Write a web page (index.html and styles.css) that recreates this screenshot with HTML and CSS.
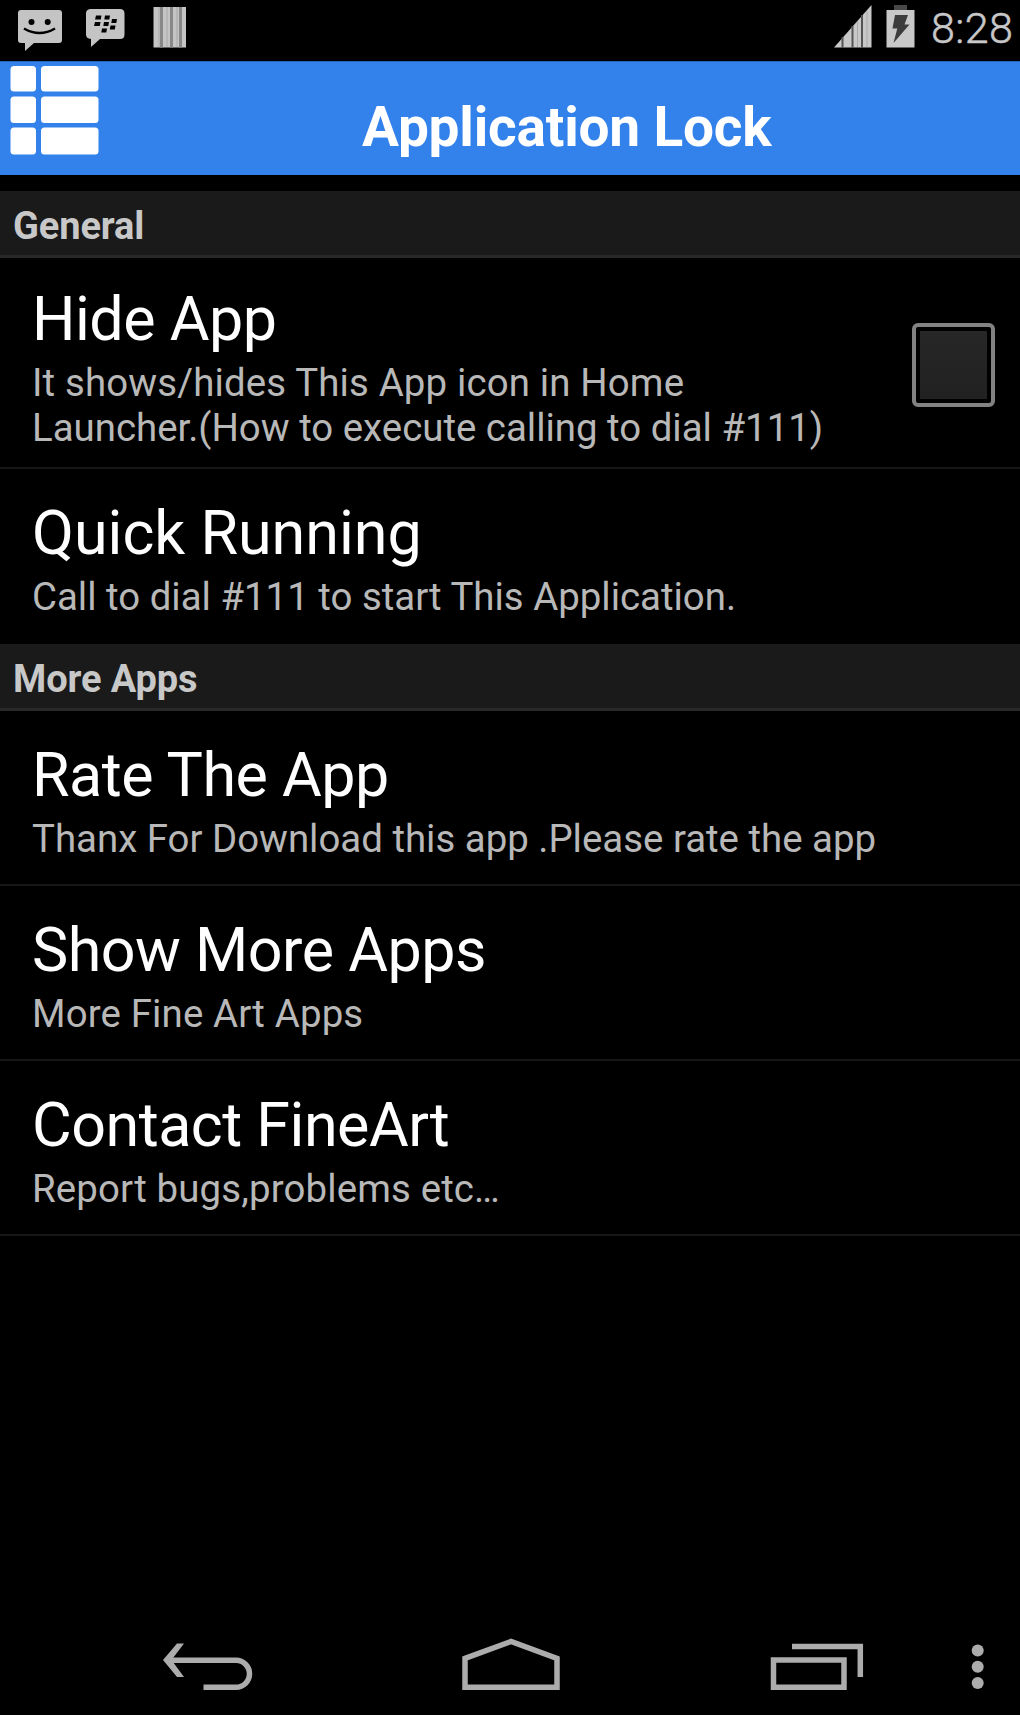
FILE: index.html
```html
<!DOCTYPE html>
<html lang="en">
<head>
  <meta charset="UTF-8">
  <meta name="viewport" content="width=device-width, initial-scale=1.0">
  <title>Application Lock</title>
  <link rel="stylesheet" href="styles.css">
</head>
<body>
  <!-- Status bar -->
  <div class="status-bar">
    <svg class="status-icons" width="200" height="61" viewBox="0 0 200 61">
      <path fill="#c4c4c4" d="M21 10h38q3 0 3 3v27q0 3-3 3H34l-9 8V43h-4q-3 0-3-3V13q0-3 3-3z"/>
      <circle cx="31.5" cy="22" r="3"/>
      <circle cx="47.7" cy="22" r="3"/>
      <path d="M24 28.5q15.500 9 31 0" fill="none" stroke="#000" stroke-width="2.600"/>
      <path fill="#c4c4c4" d="M91 9h29q4.500 0 4.500 4.500v21q0 4.500-4.500 4.500h-20l-9 8v-8q-5-.5-5-4.500v-21q0-4.500 5-4.500z"/>
      <path d="M96 15.500h5.500l-.7 4H95zM105 15.500h5l-.7 4h-5zM95 22h5.500l-.7 4H94zM104 22h5l-.7 4h-5zM112 19h5l-.7 4h-5zM110.500 25.500h5l-.7 4h-5zM102 28.500h5l-.7 4h-5z"/>
      <path fill="#c4c4c4" d="M153.500 7h32.500v40.500h-32.500z"/>
      <path d="M161.500 7v40.500M171.500 7v40.500M180.500 7v40.500" stroke="#888" stroke-width="3"/>
      <path d="M159 7v40M167 7v40M177 7v40" stroke="#aaa" stroke-width="1"/>
    </svg>
    <div class="status-right">
      <svg width="85" height="61" viewBox="833 0 85 61">
        <path fill="#c8c8c8" d="M834 47.500 871.500 5v42.500z"/>
        <path d="M842.500 37v11M852.500 26v22M862 15v33" stroke="#555" stroke-width="2"/>
        <path d="M857.500 21v26M867 11v36" stroke="#aaa" stroke-width="1"/>
        <path fill="#484848" d="M894 5h13v5h-13z"/>
        <path fill="#c8c8c8" d="M886.500 10h28v37.500h-28z"/>
        <path fill="#3c3c3c" d="M895 15h13l-3.500 9.500h5L893.500 43l3.800-14.500H892.500z"/>
      </svg>
      <span class="clock">8:28</span>
    </div>
  </div>

  <!-- Title bar -->
  <div class="title-bar">
    <svg class="menu-icon" width="90" height="90" viewBox="0 0 90 90" fill="#fff">
      <rect x="0.500" y="0" width="25.500" height="25.500" rx="3.500"/>
      <rect x="31" y="0" width="57.500" height="25.500" rx="3.500"/>
      <rect x="0.500" y="30.500" width="25.500" height="26.500" rx="3.500"/>
      <rect x="31" y="30.500" width="57.500" height="26.500" rx="3.500"/>
      <rect x="0.500" y="61.500" width="25.500" height="27" rx="3.500"/>
      <rect x="31" y="61.500" width="57.500" height="27" rx="3.500"/>
    </svg>
    <h1>Application Lock</h1>
  </div>

  <!-- Settings -->
  <div class="settings">
    <h2>General</h2>
    <div class="row row-tall">
      <div class="row-text">
        <h3>Hide App</h3>
        <p><span class="wide">It shows/hides This App icon in Home</span><br>Launcher.(How to execute calling to dial #111)</p>
      </div>
      <div class="checkbox"></div>
    </div>
    <div class="row last">
      <div class="row-text">
        <h3>Quick Running</h3>
        <p>Call to dial #111 to start This Application.</p>
      </div>
    </div>

    <h2>More Apps</h2>
    <div class="row">
      <div class="row-text">
        <h3>Rate The App</h3>
        <p>Thanx For Download this app .Please rate the app</p>
      </div>
    </div>
    <div class="row">
      <div class="row-text">
        <h3>Show More Apps</h3>
        <p class="wide">More Fine Art Apps</p>
      </div>
    </div>
    <div class="row">
      <div class="row-text">
        <h3>Contact FineArt</h3>
        <p class="wide">Report bugs,problems etc…</p>
      </div>
    </div>
  </div>

  <!-- Navigation bar -->
  <div class="nav-bar">
    <svg width="1020" height="95" viewBox="0 0 1020 95" fill="none" stroke="#acacac" stroke-width="5.500">
      <path d="M169 40.300h67a13.500 13.500 0 0 1 0 27h-32.500"/>
      <path fill="#acacac" stroke="none" d="M163 40 177 23.500h7L171.500 40 184 57h-7z"/>
      <path d="M465 38.300 511 21.500l46 16.800v29H465z"/>
      <path d="M773.500 40h70.500v27.300h-70.500zM792 26.500h68.300V57"/>
      <g fill="#acacac" stroke="none">
        <circle cx="977.700" cy="30.500" r="6"/>
        <circle cx="977.700" cy="46.700" r="6"/>
        <circle cx="977.700" cy="63" r="6"/>
      </g>
    </svg>
  </div>
</body>
</html>
```
FILE: styles.css
```css
* {
  box-sizing: border-box;
}
body {
  margin: 0;
  height: 1715px;
  display: flex;
  flex-direction: column;
  background: #000;
  color: #fff;
  font-family: Roboto, "Liberation Sans", sans-serif;
  overflow: hidden;
}
h1, h2, h3, p {
  margin: 0;
  white-space: nowrap;
}
svg {
  display: block;
}
.status-bar {
  height: 61px;
  display: flex;
  justify-content: space-between;
}
.status-right {
  display: flex;
}
.clock {
  width: 102px;
  padding-left: 13px;
  font-size: 43px;
  letter-spacing: 0.4px;
  line-height: 57px;
  color: #c8c8c8;
  font-weight: 300;
  -webkit-text-stroke: 0.5px #c8c8c8;
}
.title-bar {
  height: 114px;
  display: flex;
  padding: 4px 10px 0;
  background: #3382eb;
  border-top: 1px solid #2566bd;
}
.title-bar h1 {
  margin-left: 262px;
  font-size: 55px;
  font-weight: bold;
  letter-spacing: -0.2px;
  line-height: 123px;
}
.settings {
  flex: 1;
  padding-top: 16px;
}
.settings h2 {
  height: 67px;
  padding-left: 13px;
  background: #1a1a1a;
  border-bottom: 3px solid #282828;
  color: #c8c8c8;
  font-size: 38px;
  font-weight: bold;
  letter-spacing: -0.1px;
  line-height: 70px;
}
.row {
  height: 175px;
  display: flex;
  justify-content: space-between;
  padding: 29px 25px 0 32px;
  border-bottom: 2px solid #161616;
}
.row-tall {
  height: 211px;
  padding-top: 26px;
}
.row.last {
  border-bottom: none;
}
.row h3 {
  font-size: 61px;
  font-weight: normal;
  letter-spacing: -0.5px;
  line-height: 71px;
}
.row.last h3 {
  letter-spacing: 0;
}
.row p {
  margin-top: 5px;
  color: #b8b8b8;
  font-size: 38.400px;
  line-height: 45px;
}
.row .wide {
  letter-spacing: 0.15px;
}
.checkbox {
  width: 83px;
  height: 84px;
  margin-top: 39px;
  padding: 4px;
  border: 4px solid #828282;
  border-radius: 6px;
  background: linear-gradient(#272727, #212121) content-box;
}
.nav-bar {
  height: 95px;
}
```
